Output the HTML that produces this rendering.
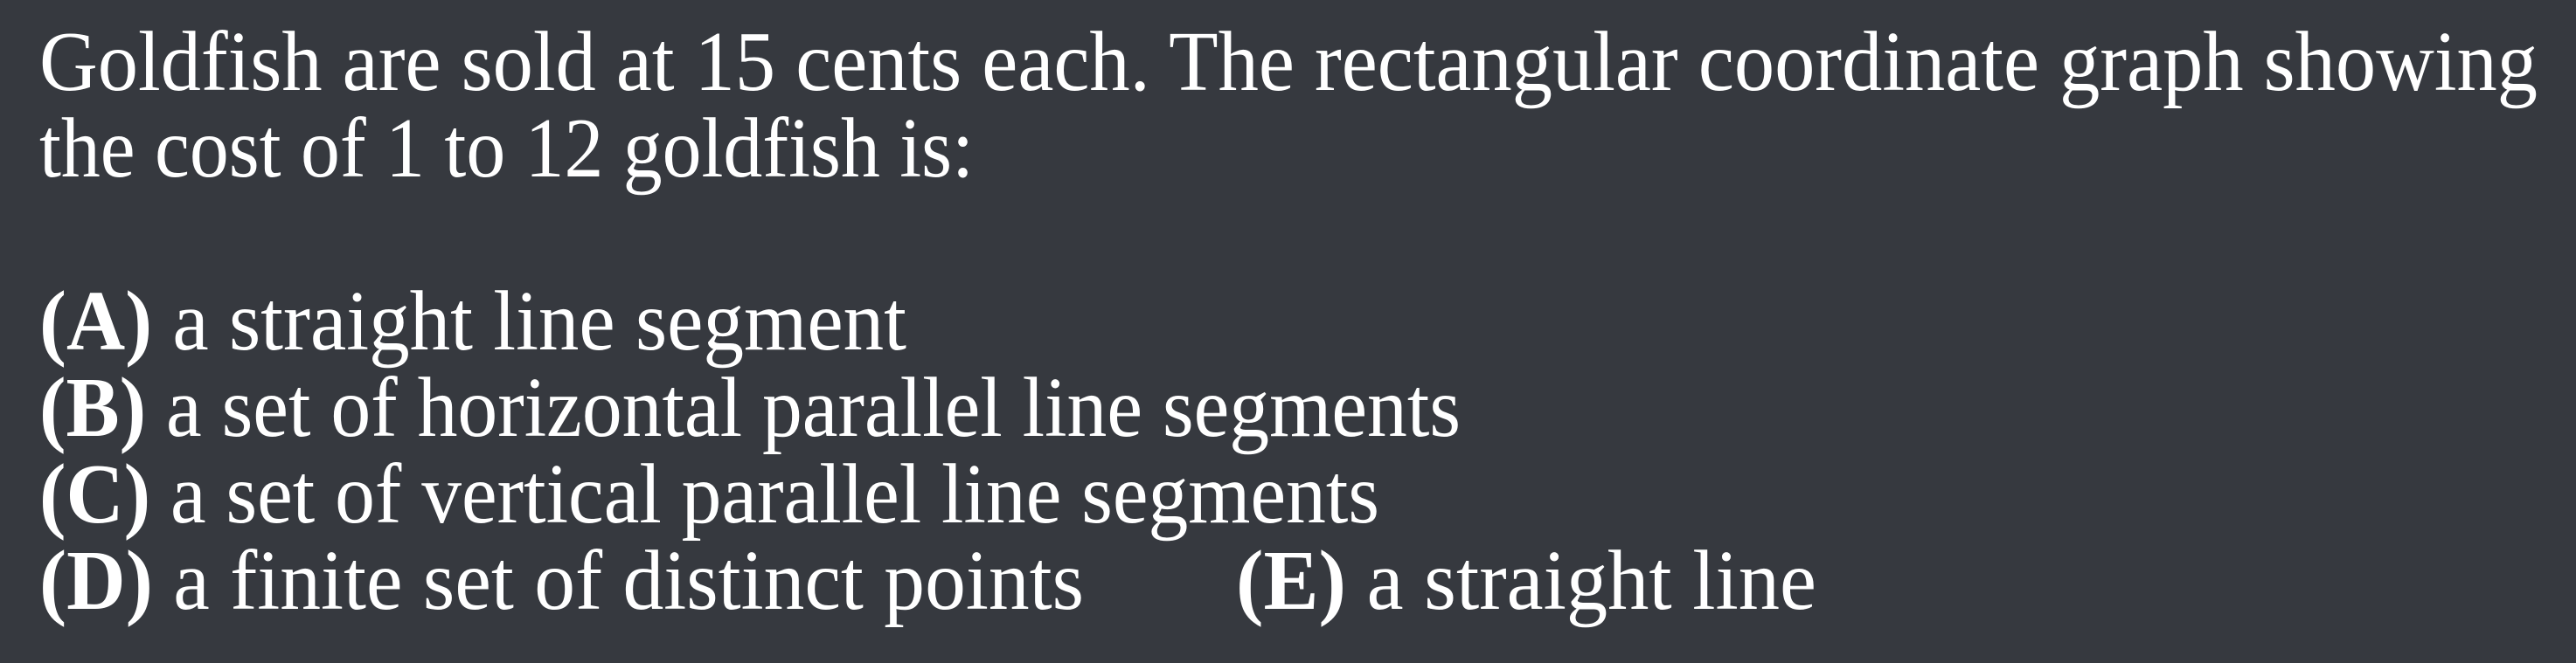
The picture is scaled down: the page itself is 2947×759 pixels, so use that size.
<!DOCTYPE html>
<html><head><meta charset="utf-8"><style>
html,body{margin:0;padding:0;background:#36393f;}
svg{display:block}
text{font-family:"Liberation Serif",serif;font-size:98px;fill:#fff}
</style></head><body>
<svg width="2947" height="759" viewBox="0 0 2947 759">
<rect width="2947" height="759" fill="#36393f"/>
<text x="45" y="103" textLength="2858" lengthAdjust="spacingAndGlyphs">Goldfish are sold at 15 cents each. The rectangular coordinate graph showing</text>
<text x="45" y="202" textLength="1069" lengthAdjust="spacingAndGlyphs">the cost of 1 to 12 goldfish is:</text>
<text x="45" y="400" textLength="992" lengthAdjust="spacingAndGlyphs"><tspan font-weight="bold">(A)</tspan> a straight line segment</text>
<text x="45" y="499" textLength="1626" lengthAdjust="spacingAndGlyphs"><tspan font-weight="bold">(B)</tspan> a set of horizontal parallel line segments</text>
<text x="45" y="598" textLength="1533" lengthAdjust="spacingAndGlyphs"><tspan font-weight="bold">(C)</tspan> a set of vertical parallel line segments</text>
<text x="45" y="697" textLength="1195" lengthAdjust="spacingAndGlyphs"><tspan font-weight="bold">(D)</tspan> a finite set of distinct points</text>
<text x="1414" y="697" textLength="664" lengthAdjust="spacingAndGlyphs"><tspan font-weight="bold">(E)</tspan> a straight line</text>
</svg>
</body></html>
